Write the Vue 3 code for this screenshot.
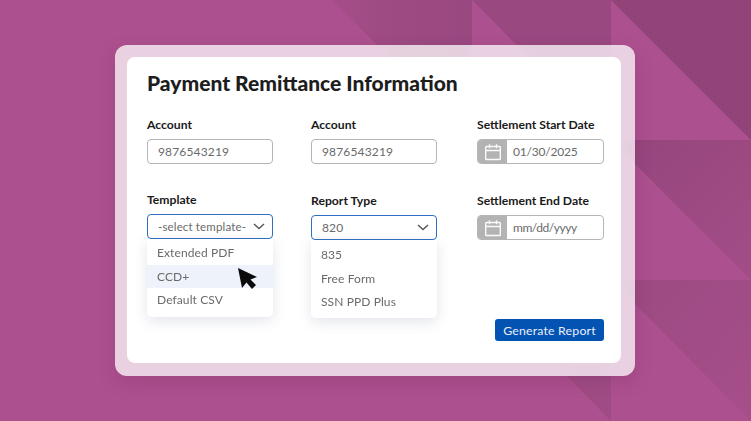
<script setup>
const templates = ['Extended PDF', 'CCD+', 'Default CSV']
const reportTypes = ['835', 'Free Form', 'SSN PPD Plus']
</script>

<template>
  <div class="page">
    <svg class="bg" viewBox="0 0 751 421" width="751" height="421">
      <defs>
        <linearGradient id="fadeA" x1="0" y1="0" x2="1" y2="0">
          <stop offset="0" stop-color="#a64d89" />
          <stop offset="0.5" stop-color="#9c4a80" />
          <stop offset="1" stop-color="#9a4880" />
        </linearGradient>
        <linearGradient id="fadeB" x1="0" y1="0" x2="1" y2="1">
          <stop offset="0" stop-color="#96457c" />
          <stop offset="1" stop-color="#a24d87" />
        </linearGradient>
        <linearGradient id="fadeC" x1="0" y1="0" x2="1" y2="1">
          <stop offset="0" stop-color="#9c4a81" />
          <stop offset="1" stop-color="#a64e8a" />
        </linearGradient>
      </defs>
      <polygon points="332,0 472,0 472,140" fill="url(#fadeA)" />
      <polygon points="472,0 611,0 611,140" fill="#994880" />
      <polygon points="611,0 751,0 751,140" fill="#924377" />
      <polygon points="472,140 611,140 611,280" fill="#9a4980" />
      <polygon points="611,140 751,140 751,280" fill="url(#fadeB)" />
      <polygon points="472,280 611,280 611,421" fill="#a04c84" />
      <polygon points="611,280 751,280 751,421" fill="url(#fadeC)" />
    </svg>

    <div class="frame">
      <div class="card">
        <h1>Payment Remittance Information</h1>
        <div class="form">
          <div class="col">
            <div class="field">
              <label>Account</label>
              <div class="input">9876543219</div>
            </div>
            <div class="field lower first">
              <label>Template</label>
              <div class="select-wrap">
                <div class="input select">
                  <span class="tight">-select template-</span>
                  <svg class="chev" width="12" height="7" viewBox="0 0 12 7"><path d="M1 1l5 4.5L11 1" /></svg>
                </div>
                <ul class="menu">
                  <li v-for="t in templates" :key="t" :class="{ hover: t === 'CCD+' }">{{ t }}</li>
                </ul>
                <svg class="cursor" width="22" height="24" viewBox="0 0 22 24">
                  <polygon points="1,1 20,10 13.5,12.5 19,18 15,22 9.5,15.5 5,21" fill="#0b0b0b" />
                </svg>
              </div>
            </div>
          </div>

          <div class="col">
            <div class="field">
              <label>Account</label>
              <div class="input">9876543219</div>
            </div>
            <div class="field lower">
              <label>Report Type</label>
              <div class="select-wrap">
                <div class="input select">
                  <span>820</span>
                  <svg class="chev" width="12" height="7" viewBox="0 0 12 7"><path d="M1 1l5 4.5L11 1" /></svg>
                </div>
                <ul class="menu second">
                  <li v-for="r in reportTypes" :key="r">{{ r }}</li>
                </ul>
              </div>
            </div>
          </div>

          <div class="col wide">
            <div class="field">
              <label>Settlement Start Date</label>
              <div class="input date">
                <span class="cal">
                  <svg width="16" height="18" viewBox="0 0 16 18"><path d="M1.5 3.5h13a.8.8 0 0 1 .8.8v11.4a.8.8 0 0 1-.8.8h-13a.8.8 0 0 1-.8-.8V4.300a.8.8 0 0 1 .8-.8zM.8 7.500h14.400M4.500 1.200v4M11.500 1.200v4" /></svg>
                </span>
                <span class="val">01/30/2025</span>
              </div>
            </div>
            <div class="field lower">
              <label>Settlement End Date</label>
              <div class="input date">
                <span class="cal">
                  <svg width="16" height="18" viewBox="0 0 16 18"><path d="M1.5 3.5h13a.8.8 0 0 1 .8.8v11.4a.8.8 0 0 1-.8.8h-13a.8.8 0 0 1-.8-.8V4.300a.8.8 0 0 1 .8-.8zM.8 7.500h14.400M4.500 1.200v4M11.500 1.200v4" /></svg>
                </span>
                <span class="val empty">mm/dd/yyyy</span>
              </div>
            </div>
            <button class="go">Generate Report</button>
          </div>
        </div>
      </div>
    </div>
  </div>
</template>

<style>
html, body { margin: 0; }
</style>

<style scoped>
.page {
  position: relative;
  width: 751px; height: 421px;
  overflow: hidden;
  background: #ad508f;
  box-sizing: border-box;
  padding: 45px 116px 45px 115px;
  font-family: Lato, "Noto Sans", sans-serif;
}

.bg { position: absolute; left: 0; top: 0; }

.frame {
  position: relative;
  box-sizing: border-box;
  width: 520px; height: 331px;
  padding: 12px 14px 13px 12px;
  border-radius: 12px;
  background: rgba(255,255,255,0.74);
  backdrop-filter: blur(6px);
  box-shadow: 0 6px 18px rgba(90,30,70,0.18);
}

.card {
  box-sizing: border-box;
  height: 306px;
  padding: 14px 17px 0 20px;
  background: #fff;
  border-radius: 8px;
}

h1 {
  margin: 0;
  font-size: 21px; line-height: 24px;
  font-weight: 900;
  color: #1d1d1d;
}

.form { display: flex; margin-top: 22px; }

.col { width: 126px; margin-right: 38px; }
.col.wide { width: 127px; margin-right: 0; margin-left: 2px; display: flex; flex-direction: column; }

.field label {
  display: block;
  height: 16px;
  font-size: 12.200px; line-height: 16px;
  font-weight: 700;
  color: #1a1a1a;
  margin-bottom: 6px;
}

.lower { margin-top: 29px; }
.lower.first { margin-top: 28px; }

.input {
  box-sizing: border-box;
  height: 25px;
  padding: 0 10px;
  display: flex; align-items: center;
  border: 1.500px solid #b5b5b5;
  border-radius: 4px;
  background: #fff;
  font-size: 12px;
  letter-spacing: 0.15px;
  color: #6a6a6a;
}

.select {
  justify-content: space-between;
  border: 1.500px solid #2f70c0;
  padding-right: 7px;
}
.tight { margin-right: -4px; font-size: 11.500px; }

.chev { fill: none; stroke: #555; stroke-width: 1.400; }

.select-wrap { position: relative; }

.menu {
  position: absolute; left: 0; right: 0; top: 25px;
  margin: 0; padding: 2px 0 5px;
  list-style: none;
  background: #fff;
  border-radius: 0 0 5px 5px;
  box-shadow: 0 4px 14px rgba(60,70,110,0.14);
  z-index: 1;
}
.menu.second { padding-top: 3px; padding-bottom: 4px; }

.menu li {
  height: 23.500px; line-height: 23.500px;
  padding-left: 10px;
  font-size: 12px;
  letter-spacing: 0.1px;
  color: #6a6a6a;
}
.menu li.hover { background: #eef3fb; }

.cursor { position: absolute; left: 90px; top: 53px; z-index: 2; }

.date { padding: 0; overflow: hidden; }

.cal {
  width: 29px; height: 100%;
  background: #b3b3b3;
  display: flex; align-items: center; justify-content: center;
  flex-shrink: 0;
}
.cal svg { fill: none; stroke: #fafafa; stroke-width: 1.400; }

.val { padding-left: 6px; letter-spacing: -0.2px; }
.val.empty { letter-spacing: -0.45px; }

.go {
  margin: 79px 0 0 18px;
  width: 109px; height: 22px;
  padding: 0;
  border: 0;
  border-radius: 3px;
  background: #0353b3;
  color: #e9f0f9;
  font-family: inherit;
  font-size: 12.300px;
  letter-spacing: 0.2px;
}
</style>
